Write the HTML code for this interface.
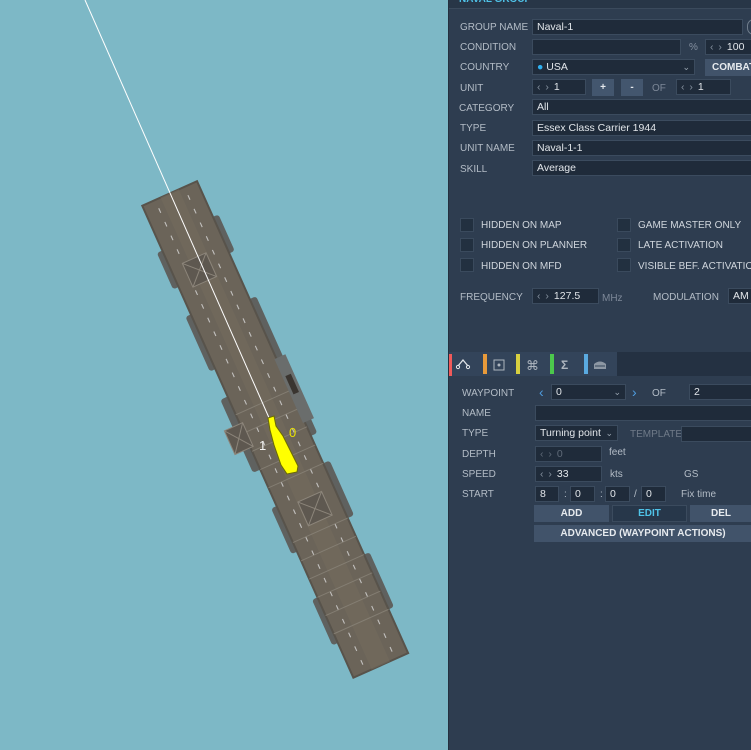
<!DOCTYPE html>
<html><head><meta charset="utf-8">
<style>
*{box-sizing:border-box;margin:0;padding:0}
body{width:751px;height:750px;overflow:hidden;position:relative;background:#7db8c6;font-family:"Liberation Sans",sans-serif;}
#panel{position:absolute;left:448px;top:0;width:303px;height:750px;background:#2e3d50;border-left:1px solid #24303f;}
.a{position:absolute;}
.l{position:absolute;font-size:10px;color:#b3bcc6;white-space:nowrap;}
.in{position:absolute;background:#1f2b3a;border:1px solid #3b4b5e;height:16px;color:#e2e6ea;font-size:10.5px;line-height:14px;padding-left:4px;white-space:nowrap;overflow:hidden;}
.ar{color:#8793a0;letter-spacing:1px;margin-right:4px}
.cb{position:absolute;width:14px;height:14px;background:#223040;border:1px solid #3a4a5d;}
.btn{position:absolute;background:#41536a;color:#e6eaee;font-size:10px;font-weight:bold;text-align:center;line-height:17px;height:17px;}
.dd{position:absolute;right:4px;top:0;color:#9aa5b1;font-size:9px}
</style></head><body>
<svg class="a" style="left:0;top:0" width="448" height="750">
 <g transform="rotate(-24.1 275 429)">
  <g fill="#5f615f">
   <rect x="239" y="220" width="8" height="40" rx="3"/><rect x="239" y="290" width="8" height="60" rx="3"/><rect x="237" y="380" width="10" height="80" rx="3"/><rect x="239" y="500" width="8" height="50" rx="3"/><rect x="239" y="600" width="8" height="50" rx="3"/>
   <rect x="303" y="210" width="8" height="40" rx="3"/><rect x="303" y="300" width="9" height="150" rx="3"/><rect x="303" y="480" width="9" height="60" rx="3"/><rect x="303" y="580" width="8" height="60" rx="3"/>
  </g>
  <rect x="245" y="171" width="60" height="517" fill="#6b6459"/>
  <rect x="245" y="171" width="60" height="517" fill="none" stroke="#58534b" stroke-width="2"/>
  <rect x="265" y="171" width="20" height="517" fill="#736b5e" opacity=".6"/>
  <line x1="259" y1="180" x2="259" y2="680" stroke="#d8d8d8" stroke-width="1.1" stroke-dasharray="5 10" opacity=".8"/>
  <line x1="291" y1="180" x2="291" y2="680" stroke="#d8d8d8" stroke-width="1.1" stroke-dasharray="5 10" opacity=".8"/>
  <g stroke="#8a8479" stroke-width="1" opacity=".8">
   <line x1="245" y1="400" x2="305" y2="400"/><line x1="245" y1="420" x2="305" y2="420"/><line x1="245" y1="440" x2="305" y2="440"/><line x1="245" y1="460" x2="305" y2="460"/><line x1="245" y1="480" x2="305" y2="480"/><line x1="245" y1="540" x2="305" y2="540"/><line x1="245" y1="560" x2="305" y2="560"/><line x1="245" y1="580" x2="305" y2="580"/><line x1="245" y1="600" x2="305" y2="600"/><line x1="245" y1="620" x2="305" y2="620"/><line x1="245" y1="640" x2="305" y2="640"/>
  </g>
  <g stroke="#8c857a" fill="#5e5850"><rect x="258" y="240" width="26" height="26"/><line x1="258" y1="240" x2="284" y2="266"/><line x1="284" y1="240" x2="258" y2="266"/>
  <rect x="266" y="505" width="26" height="26"/><line x1="266" y1="505" x2="292" y2="531"/><line x1="292" y1="505" x2="266" y2="531"/>
  <rect x="228" y="410" width="20" height="26"/><line x1="228" y1="410" x2="248" y2="436"/><line x1="248" y1="410" x2="228" y2="436"/></g>
  <rect x="303" y="365" width="12" height="70" fill="#6a6d6c"/>
  <rect x="306" y="385" width="6" height="20" fill="#3a3530"/>
 </g>
 <line x1="85" y1="0" x2="270" y2="420" stroke="#fff" stroke-width="1"/>
 <path d="M268 418 L274 416 L276 426 L283 436 L298 466 L297 472 L287 474 L281 465 L274 445 L270 430 Z" fill="#ffff00" stroke="#6b6b00" stroke-width="1"/>
 <text x="259" y="450" fill="#f4f4f4" font-size="13" font-family="Liberation Sans">1</text>
 <text x="289" y="437" fill="#e8e000" font-size="13" font-family="Liberation Sans">0</text>
</svg>

<div id="panel">
 <div class="a" style="left:0;top:0;width:303px;height:9px;background:#283647;border-bottom:1px solid #3b4a5c"></div>
 <div class="a" style="left:10px;top:-6px;color:#4fc3e8;font-size:10px;font-weight:bold">NAVAL GROUP</div>

 <div class="l" style="left:11px;top:22px">GROUP NAME</div><div class="in" style="left:83px;top:19px;width:211px">Naval-1</div>
 <div class="a" style="left:298px;top:19px;width:14px;height:16px;border:1px solid #6f7d8c;border-radius:8px"></div>
 <div class="l" style="left:11px;top:42px">CONDITION</div><div class="in" style="left:83px;top:39px;width:149px"></div>
 <div class="l" style="left:240px;top:42px;color:#8590a0">%</div><div class="in" style="left:256px;top:39px;width:50px"><span class="ar">‹ ›</span>100</div>
 <div class="l" style="left:11px;top:62px">COUNTRY</div><div class="in" style="left:83px;top:59px;width:163px"><span style="color:#2fb0f0">●</span> USA<span class="dd">⌄</span></div>
 <div class="btn" style="left:256px;top:59px;width:50px;text-align:left;padding-left:7px">COMBAT</div>
 <div class="l" style="left:11px;top:83px">UNIT</div><div class="in" style="left:83px;top:79px;width:54px"><span class="ar">‹ ›</span>1</div>
 <div class="btn" style="left:143px;top:79px;width:22px;background:#43566e">+</div><div class="btn" style="left:172px;top:79px;width:22px;background:#43566e">-</div>
 <div class="l" style="left:203px;top:83px;color:#7d8898">OF</div><div class="in" style="left:227px;top:79px;width:55px"><span class="ar">‹ ›</span>1</div>
 <div class="l" style="left:10px;top:103px">CATEGORY</div><div class="in" style="left:83px;top:99px;width:230px">All</div>
 <div class="l" style="left:11px;top:123px">TYPE</div><div class="in" style="left:83px;top:120px;width:230px">Essex Class Carrier 1944</div>
 <div class="l" style="left:11px;top:143px">UNIT NAME</div><div class="in" style="left:83px;top:140px;width:230px">Naval-1-1</div>
 <div class="l" style="left:11px;top:164px">SKILL</div><div class="in" style="left:83px;top:160px;width:230px">Average</div>

 <div class="cb" style="left:11px;top:218px"></div><div class="l" style="left:32px;top:220px;color:#d0d6dd">HIDDEN ON MAP</div>
 <div class="cb" style="left:11px;top:238px"></div><div class="l" style="left:32px;top:240px;color:#d0d6dd">HIDDEN ON PLANNER</div>
 <div class="cb" style="left:11px;top:258px"></div><div class="l" style="left:32px;top:261px;color:#d0d6dd">HIDDEN ON MFD</div>
 <div class="cb" style="left:168px;top:218px"></div><div class="l" style="left:189px;top:220px;color:#d0d6dd">GAME MASTER ONLY</div>
 <div class="cb" style="left:168px;top:238px"></div><div class="l" style="left:189px;top:240px;color:#d0d6dd">LATE ACTIVATION</div>
 <div class="cb" style="left:168px;top:258px"></div><div class="l" style="left:189px;top:261px;color:#d0d6dd">VISIBLE BEF. ACTIVATION</div>

 <div class="l" style="left:11px;top:292px">FREQUENCY</div><div class="in" style="left:83px;top:288px;width:67px"><span class="ar">‹ ›</span>127.5</div>
 <div class="l" style="left:153px;top:293px;color:#7d8898;font-size:10px">MHz</div>
 <div class="l" style="left:204px;top:292px">MODULATION</div><div class="in" style="left:279px;top:288px;width:30px">AM</div>

 <div class="a" style="left:0;top:352px;width:303px;height:24px;background:#243142"></div>
 <div class="a" style="left:0;top:352px;width:168px;height:24px;background:#33445a"></div>
 <div class="a" style="left:0;top:354px;width:3px;height:22px;background:#f05a5a"></div>
 <div class="a" style="left:34px;top:354px;width:4px;height:20px;background:#e89a3a"></div>
 <div class="a" style="left:67px;top:354px;width:4px;height:20px;background:#d8d040"></div>
 <div class="a" style="left:101px;top:354px;width:4px;height:20px;background:#4cc84c"></div>
 <div class="a" style="left:135px;top:354px;width:4px;height:20px;background:#5aaae0"></div>
 <svg class="a" style="left:0;top:352px" width="168" height="24">
  <path d="M9 14 L14 8 L19 14" fill="none" stroke="#e0e4e8" stroke-width="1.3"/><circle cx="9" cy="15" r="1.6" fill="none" stroke="#e0e4e8"/><circle cx="19" cy="15" r="1.6" fill="none" stroke="#e0e4e8"/>
  <rect x="45" y="8" width="10" height="10" fill="none" stroke="#aeb6bf"/><circle cx="50" cy="13" r="1.5" fill="#aeb6bf"/>
  <text x="77" y="18" fill="#aeb6bf" font-size="13">⌘</text>
  <text x="112" y="17" fill="#aeb6bf" font-size="12" font-weight="bold">Σ</text>
  <path d="M145 17 L145 12 Q151 7 157 12 L157 17 Z" fill="#8d97a3"/><line x1="146" y1="14" x2="156" y2="14" stroke="#33445a"/>
 </svg>

 <div class="l" style="left:13px;top:388px">WAYPOINT</div>
 <div class="l" style="left:90px;top:384px;color:#4f9de0;font-size:14px">‹</div>
 <div class="in" style="left:102px;top:384px;width:75px">0<span class="dd">⌄</span></div>
 <div class="l" style="left:183px;top:384px;color:#4f9de0;font-size:14px">›</div>
 <div class="l" style="left:203px;top:388px">OF</div><div class="in" style="left:240px;top:384px;width:70px">2</div>
 <div class="l" style="left:13px;top:408px">NAME</div><div class="in" style="left:86px;top:405px;width:225px"></div>
 <div class="l" style="left:13px;top:428px">TYPE</div><div class="in" style="left:86px;top:425px;width:83px">Turning point<span class="dd">⌄</span></div>
 <div class="l" style="left:181px;top:429px;color:#6f7a88">TEMPLATE</div><div class="in" style="left:232px;top:426px;width:80px"></div>
 <div class="l" style="left:13px;top:449px">DEPTH</div><div class="in" style="left:86px;top:446px;width:67px;color:#5f6a78"><span class="ar" style="color:#5f6a78">‹ ›</span>0</div>
 <div class="l" style="left:160px;top:447px">feet</div>
 <div class="l" style="left:13px;top:469px">SPEED</div><div class="in" style="left:86px;top:466px;width:67px"><span class="ar">‹ ›</span>33</div>
 <div class="l" style="left:161px;top:469px">kts</div><div class="l" style="left:235px;top:469px">GS</div>
 <div class="l" style="left:13px;top:489px">START</div>
 <div class="in" style="left:86px;top:486px;width:24px">8</div><div class="l" style="left:115px;top:489px">:</div>
 <div class="in" style="left:121px;top:486px;width:25px">0</div><div class="l" style="left:151px;top:489px">:</div>
 <div class="in" style="left:156px;top:486px;width:25px">0</div><div class="l" style="left:185px;top:489px">/</div>
 <div class="in" style="left:192px;top:486px;width:25px">0</div>
 <div class="l" style="left:232px;top:489px">Fix time</div>

 <div class="btn" style="left:85px;top:505px;width:75px">ADD</div>
 <div class="btn" style="left:163px;top:505px;width:75px;background:#27374a;color:#4fc3e8;border:1px solid #3b4b5e;line-height:15px">EDIT</div>
 <div class="btn" style="left:241px;top:505px;width:62px">DEL</div>
 <div class="btn" style="left:85px;top:525px;width:218px">ADVANCED (WAYPOINT ACTIONS)</div>
</div>
</body></html>
